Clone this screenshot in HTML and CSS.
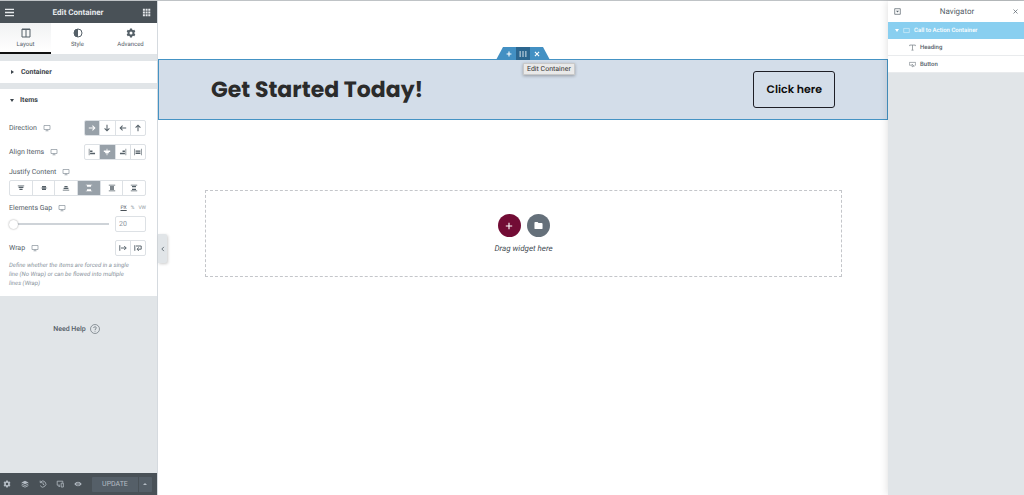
FILE: index.html
```html
<!DOCTYPE html>
<html lang="en">
  <head>
    <meta charset="UTF-8" />
    <meta name="viewport" content="width=device-width, initial-scale=1.0" />
    <title>Edit Container</title>
    <link rel="stylesheet" href="styles.css">
  </head>
  <body>
    <!-- Shared icons -->
    <svg class="sprite" aria-hidden="true">
      <symbol id="desktop" viewBox="0 0 8 8">
        <path d="M1 1.500h6v4H1zM2.500 6.800h3M4 5.500v1.300" fill="none" stroke="currentColor" stroke-width=".7" />
      </symbol>
      <symbol id="gear" viewBox="0 0 10 10">
        <path fill="currentColor" fill-rule="evenodd" d="M4 .6h2l.3 1.200.8.4 1.200-.4 1 1.800-.9.8v1.200l.9.8-1 1.800-1.200-.4-.8.4L6 9.400H4l-.3-1.200-.8-.4-1.200.4-1-1.800.9-.8V4.400l-.9-.8 1-1.800 1.200.4.8-.4zM5 3.500a1.500 1.500 0 1 0 0 3 1.500 1.500 0 0 0 0-3z" />
      </symbol>
      <symbol id="arrow" viewBox="0 0 10 10">
        <path d="M1 5h7.500M5.500 2 8.500 5 5.500 8" fill="none" stroke="currentColor" stroke-width="1.300" />
      </symbol>
      <symbol id="align-side" viewBox="0 0 10 10">
        <path fill="currentColor" d="M1 1h.8v8H1zM2.600 3h3v2h-3zM2.600 5.800h6.200v2H2.600z" />
      </symbol>
    </svg>

    <div class="editor">
      <aside class="panel">
        <header class="panel-header">
          <button class="icon-btn" aria-label="Menu">
            <svg viewBox="0 0 10 10"><path d="M0 1.500h10M0 5h10M0 8.500h10" stroke="currentColor" stroke-width="1.500" /></svg>
          </button>
          <h1>Edit Container</h1>
          <button class="icon-btn" aria-label="Widgets">
            <svg viewBox="0 0 10 10"><path d="M1 2h2.200M4 2h2.200M7 2h2.200M1 5h2.200M4 5h2.200M7 5h2.200M1 8h2.200M4 8h2.200M7 8h2.200" stroke="currentColor" stroke-width="2.200" /></svg>
          </button>
        </header>

        <nav class="tabs">
          <button class="tab active">
            <svg viewBox="0 0 10 10"><path d="M1 1h8v8H1zM5 1v8M1 1.500h8" fill="none" stroke="currentColor" /></svg>
            Layout
          </button>
          <button class="tab">
            <svg viewBox="0 0 10 10"><circle cx="5" cy="5" r="4" fill="none" stroke="currentColor" /><path d="M5 1a4 4 0 0 0 0 8z" fill="currentColor" /></svg>
            Style
          </button>
          <button class="tab">
            <svg><use href="#gear" /></svg>
            Advanced
          </button>
        </nav>

        <section class="section">
          <button class="section-title" aria-expanded="false"><span class="caret"></span>Container</button>
        </section>

        <section class="section">
          <button class="section-title" aria-expanded="true"><span class="caret down"></span>Items</button>
          <div class="controls">
            <div class="row">
              <span class="label">Direction <svg><use href="#desktop" /></svg></span>
              <div class="choices">
                <button class="active" aria-label="Row"><svg><use href="#arrow" /></svg></button>
                <button aria-label="Column"><svg class="turn-down"><use href="#arrow" /></svg></button>
                <button aria-label="Row reversed"><svg class="turn-back"><use href="#arrow" /></svg></button>
                <button aria-label="Column reversed"><svg class="turn-up"><use href="#arrow" /></svg></button>
              </div>
            </div>

            <div class="row">
              <span class="label">Align Items <svg><use href="#desktop" /></svg></span>
              <div class="choices">
                <button aria-label="Start"><svg><use href="#align-side" /></svg></button>
                <button class="active" aria-label="Center"><svg viewBox="0 0 10 10"><path fill="currentColor" d="M4.500 1h1v2H9v2H7.300v1.500H5.500V9h-1V6.500H2.700V5H1V3h3.500z" /></svg></button>
                <button aria-label="End"><svg class="flip"><use href="#align-side" /></svg></button>
                <button aria-label="Stretch"><svg viewBox="0 0 10 10"><path fill="currentColor" d="M.5 1h.8v8H.5zM8.700 1h.8v8h-.8zM2 3h6v1.800H2zM2 5.600h6v1.800H2z" /></svg></button>
              </div>
            </div>

            <div class="stack">
              <span class="label">Justify Content <svg><use href="#desktop" /></svg></span>
              <div class="choices wide">
                <button aria-label="Start"><svg viewBox="0 0 10 10"><path fill="currentColor" d="M1 2h8v.8H1zM2 3.400h6V5H2zM3 5.800h4v1.600H3z" /></svg></button>
                <button aria-label="Center"><svg viewBox="0 0 10 10"><path fill="currentColor" d="M2.500 2.500h5v1.900h-5zM1 4.600h8v.8H1zM2.500 5.600h5v1.900h-5z" /></svg></button>
                <button aria-label="End"><svg viewBox="0 0 10 10"><path fill="currentColor" d="M3 2.500h4v1.600H3zM2 4.800h6v1.600H2zM1 7.200h8V8H1z" /></svg></button>
                <button class="active" aria-label="Space between"><svg viewBox="0 0 10 10"><path fill="currentColor" d="M1 .8h8v.8H1zM2.500 1.600h5v1.800h-5zM2.500 6.600h5v1.800h-5zM1 8.400h8v.8H1z" /></svg></button>
                <button aria-label="Space around"><svg viewBox="0 0 10 10"><path fill="currentColor" d="M1 1h8v.8H1zM2.500 2.900h5v1.800h-5zM2.500 5.300h5v1.800h-5zM1 8.200h8V9H1z" /></svg></button>
                <button aria-label="Space evenly"><svg viewBox="0 0 10 10"><path fill="currentColor" d="M1 1h8v.8H1zM2.500 2.600h5v1.600h-5zM2.500 5.800h5v1.600h-5zM1 8.200h8V9H1z" /></svg></button>
              </div>
            </div>

            <div class="stack">
              <div class="row">
                <label class="label" for="gap">Elements Gap <svg><use href="#desktop" /></svg></label>
                <div class="units"><button class="active">PX</button><button>%</button><button>VW</button></div>
              </div>
              <div class="row slider-row">
                <input type="range" id="gap" min="0" max="100" value="0" />
                <input type="text" class="number" value="20" aria-label="Elements Gap value" />
              </div>
            </div>

            <div class="stack">
              <div class="row">
                <span class="label">Wrap <svg><use href="#desktop" /></svg></span>
                <div class="choices two">
                  <button aria-label="No wrap"><svg viewBox="0 0 10 10"><path d="M1 1.500v7M2.500 5h6.500M6.500 2.500 9 5 6.500 7.500" fill="none" stroke="currentColor" stroke-width="1.200" /></svg></button>
                  <button aria-label="Wrap"><svg viewBox="0 0 10 10"><path d="M1 1.500v7M2.500 2.500H9v4H4M6 4.300l-2.200 2.200L6 8.700" fill="none" stroke="currentColor" stroke-width="1.200" /></svg></button>
                </div>
              </div>
              <p class="hint">Define whether the items are forced in a single line (No Wrap) or can be flowed into multiple lines (Wrap)</p>
            </div>
          </div>
        </section>

        <a class="help" href="#">Need Help
          <svg viewBox="0 0 10 10"><circle cx="5" cy="5" r="4.500" fill="none" stroke="currentColor" stroke-width=".6" /><path d="M3.700 4c0-1.700 2.600-1.600 2.600-.1C6.300 4.900 5 4.900 5 6M5 6.800v.8" fill="none" stroke="currentColor" stroke-width=".7" /></svg>
        </a>

        <footer class="panel-footer">
          <button aria-label="Settings"><svg><use href="#gear" /></svg></button>
          <button aria-label="Structure"><svg viewBox="0 0 10 10"><path d="M5 .8 9.500 3 5 5.200.5 3z" fill="currentColor" /><path d="M.8 5 5 7l4.200-2M.8 7 5 9l4.200-2" fill="none" stroke="currentColor" /></svg></button>
          <button aria-label="History"><svg viewBox="0 0 10 10"><path d="M2 2.500A3.800 3.800 0 1 1 1.500 7M1.500.8v2.500H4M5 3v2.300l1.800 1" fill="none" stroke="currentColor" /></svg></button>
          <button aria-label="Responsive"><svg viewBox="0 0 10 10"><path d="M8.500 3.500V1.500h-7v5H5M3 8h2M6.500 4h2.700v4.800H6.500z" fill="none" stroke="currentColor" /></svg></button>
          <button aria-label="Preview"><svg viewBox="0 0 10 10"><path fill="currentColor" fill-rule="evenodd" d="M.3 5Q5-.5 9.700 5 5 10.500.3 5zM5 3a2 2 0 1 0 0 4 2 2 0 0 0 0-4z" /><circle cx="5" cy="5" r="1" fill="currentColor" /></svg></button>
          <div class="update">
            <button class="update-btn">UPDATE</button>
            <button class="update-more" aria-label="Save options"><span class="caret up"></span></button>
          </div>
        </footer>
      </aside>

      <main class="canvas">
        <button class="collapse" aria-label="Hide panel">
          <svg viewBox="0 0 10 10"><path d="M6.500 1.500 3 5l3.500 3.500" fill="none" stroke="currentColor" stroke-width="1.400" /></svg>
        </button>

        <section class="cta">
          <div class="handles">
            <button aria-label="Add"><svg viewBox="0 0 10 10"><path d="M5 1v8M1 5h8" stroke="currentColor" stroke-width="1.800" /></svg></button>
            <button class="edit" aria-label="Edit Container"><svg viewBox="0 0 10 10"><path d="M.5 2.500h2M4 2.500h2M7.500 2.500h2M.5 5h2M4 5h2M7.500 5h2M.5 7.500h2M4 7.500h2M7.500 7.500h2" stroke="currentColor" stroke-width="1.500" /></svg></button>
            <button aria-label="Delete"><svg viewBox="0 0 10 10"><path d="m1.500 1.500 7 7M8.500 1.500l-7 7" stroke="currentColor" stroke-width="1.800" /></svg></button>
          </div>
          <span class="tooltip">Edit Container</span>
          <h2>Get Started Today!</h2>
          <button class="cta-btn">Click here</button>
        </section>

        <section class="drop">
          <div class="drop-actions">
            <button class="add" aria-label="Add new container"><svg viewBox="0 0 10 10"><path d="M5 1v8M1 5h8" stroke="currentColor" stroke-width="1.400" /></svg></button>
            <button class="folder" aria-label="Add template"><svg viewBox="0 0 10 10"><path d="M.5 2Q.5 1 1.500 1H4l1 1.200h3.500q1 0 1 1V8q0 1-1 1h-7q-1 0-1-1z" fill="currentColor" /></svg></button>
          </div>
          <p>Drag widget here</p>
        </section>
      </main>

      <aside class="navigator">
        <header>
          <button class="icon-btn" aria-label="Dock"><svg viewBox="0 0 10 10"><path d="M1 1h8v8H1z" fill="none" stroke="currentColor" /><path d="M2.800 4h4.400L5 6.500z" fill="currentColor" /></svg></button>
          <h2>Navigator</h2>
          <button class="icon-btn small" aria-label="Close"><svg viewBox="0 0 10 10"><path d="m1 1 8 8M9 1 1 9" stroke="currentColor" stroke-width="1.400" /></svg></button>
        </header>
        <ul>
          <li><a class="active" href="#"><span class="caret down"></span><svg viewBox="0 0 10 10"><path d="M1 2h8v6H1z" fill="none" stroke="currentColor" stroke-width=".8" /></svg>Call to Action Container</a></li>
          <li><a href="#"><svg viewBox="0 0 10 10"><path d="M1 3V1.500h8V3M5 1.500v7M3.500 8.800h3" fill="none" stroke="currentColor" /></svg>Heading</a></li>
          <li><a href="#"><svg viewBox="0 0 10 10"><path d="M4 6H.5V2h9v4H8M4.500 4.500v4l1.200-1h1.800z" fill="none" stroke="currentColor" stroke-width=".9" /></svg>Button</a></li>
        </ul>
      </aside>
    </div>
  </body>
</html>
```

FILE: styles.css
```css
* {
  box-sizing: border-box;
}
body {
  margin: 0;
  font-family: Roboto, sans-serif;
  font-size: 7px;
  line-height: 9px;
  color: #556068;
  background: #fff;
  text-rendering: geometricPrecision;
}
h1,
h2,
p,
ul {
  margin: 0;
  padding: 0;
}
button,
input {
  font: inherit;
  color: inherit;
  margin: 0;
  padding: 0;
  border: 0;
  background: none;
  text-rendering: inherit;
}
button {
  display: flex;
  align-items: center;
  justify-content: center;
  cursor: pointer;
}
a {
  color: inherit;
  text-decoration: none;
}
svg {
  width: 8px;
  height: 8px;
  flex: none;
}
.sprite {
  display: none;
}
.editor {
  display: grid;
  grid-template-columns: 158px 1fr 136px;
  min-height: 100vh;
  border-top: 1px solid #bfc3c6;
}

/* Triangles */
.caret {
  border: 2px solid transparent;
  border-left: 3px solid currentColor;
  border-right: 0;
}
.caret.down {
  border: 2px solid transparent;
  border-top: 3px solid currentColor;
  border-bottom: 0;
}
.caret.up {
  border: 2px solid transparent;
  border-bottom: 2px solid currentColor;
  border-top: 0;
}

/* Left panel */
.panel {
  display: flex;
  flex-direction: column;
  background: #e1e5e8;
  border-right: 1px solid #d5dadf;
}
.panel-header {
  display: flex;
  align-items: center;
  justify-content: space-between;
  height: 22px;
  padding: 0 6px 0 5px;
  background: #495157;
  color: #e6e9ec;
}
.panel-header h1 {
  font-size: 8px;
  font-weight: 700;
}
.icon-btn svg {
  width: 9px;
  height: 9px;
}
.tabs {
  display: grid;
  grid-template-columns: 51px 1fr 1fr;
  height: 31px;
  margin-bottom: 7px;
  background: #fff;
}
.tab {
  flex-direction: column;
  gap: 2px;
  padding-top: 2px;
  font-size: 6px;
  border-bottom: 2px solid transparent;
}
.tab svg {
  width: 10px;
  height: 10px;
}
.tab.active {
  background: linear-gradient(#f1f2f3, #fff);
  border-color: #111;
}
.section {
  margin-bottom: 6px;
  background: #fff;
}
.section-title {
  justify-content: flex-start;
  gap: 6px;
  width: 100%;
  height: 22px;
  padding-left: 10px;
  font-weight: 700;
  color: #3c444b;
}
.section-title .caret {
  margin: 0 1px;
}
.section-title .caret.down {
  margin: 0;
}
.controls {
  display: flex;
  flex-direction: column;
  gap: 8px;
  padding: 9px 11px 8px 9px;
}
.row {
  display: flex;
  align-items: center;
  justify-content: space-between;
}
.stack {
  display: flex;
  flex-direction: column;
}
.label {
  display: flex;
  align-items: center;
  gap: 6px;
  line-height: 8px;
}
.label svg {
  color: #88929b;
}
.choices {
  display: flex;
  width: 62px;
  height: 16px;
  border: 1px solid #dde1e5;
  border-radius: 2px;
  overflow: hidden;
}
.choices.wide {
  width: 100%;
  margin-top: 4px;
}
.choices.two {
  width: 31px;
}
.choices button {
  flex: 1;
}
.choices button + button {
  border-left: 1px solid #dde1e5;
}
.choices button.active {
  background: #98a1a9;
  color: #fff;
}
.turn-down {
  rotate: 90deg;
}
.turn-back {
  rotate: 180deg;
}
.turn-up {
  rotate: 270deg;
}
.flip {
  scale: -1 1;
}
.units {
  display: flex;
  gap: 4px;
  font-size: 5px;
  line-height: 8px;
  color: #8b949c;
}
.units .active {
  color: #495157;
  text-decoration: underline;
}
.slider-row {
  gap: 6px;
  margin-top: 4px;
}
input[type="range"] {
  appearance: none;
  flex: 1;
  min-width: 0;
  height: 10px;
  background: linear-gradient(#ced3d8, #ced3d8) center / 100% 2px no-repeat;
}
input[type="range"]::-webkit-slider-thumb {
  appearance: none;
  width: 9px;
  height: 9px;
  border-radius: 50%;
  background: #fff;
  box-shadow: 0 0 2px rgba(0, 0, 0, 0.4);
}
.number {
  width: 31px;
  height: 16px;
  padding: 0 3px;
  border: 1px solid #dde1e5;
  border-radius: 2px;
  color: #8b949c;
}
.hint {
  margin-top: 5px;
  padding-right: 12px;
  font-size: 6px;
  font-style: italic;
  color: #89939c;
}
.help {
  display: flex;
  align-items: center;
  justify-content: center;
  gap: 4px;
  margin-top: 22px;
  padding-right: 4px;
  font-weight: 500;
}
.help svg {
  width: 10px;
  height: 10px;
}
.panel-footer {
  display: flex;
  justify-content: space-between;
  align-items: center;
  height: 22px;
  margin-top: auto;
  padding: 0 5px 0 3px;
  background: #495157;
  color: #b4bcc4;
}
.update {
  display: flex;
  height: 15px;
  background: #555f68;
  border-radius: 1px;
}
.update-btn {
  width: 46px;
}
.update-more {
  width: 14px;
  border-left: 1px solid #495157;
}

/* Page canvas */
.canvas {
  position: relative;
  padding-top: 58px;
}
.collapse {
  position: absolute;
  left: 0;
  top: 233px;
  width: 9px;
  height: 29px;
  background: #e1e5e8;
  border-radius: 0 2px 2px 0;
  box-shadow: 1px 1px 3px rgba(0, 0, 0, 0.2);
}
.collapse svg {
  width: 6px;
  height: 6px;
}
.cta {
  position: relative;
  display: flex;
  align-items: center;
  justify-content: space-between;
  padding: 11px 52px;
  background: #d3dde9;
  border: 1px solid #4593c4;
}
.cta h2 {
  font-family: Poppins, Inter, sans-serif;
  font-size: 22px;
  line-height: 32px;
  font-weight: 700;
  color: #2b2b2b;
}
.cta-btn {
  height: 37px;
  padding: 0 12px;
  border: 1px solid #1e1e26;
  border-radius: 3px;
  font-family: Poppins, Inter, sans-serif;
  font-size: 11px;
  font-weight: 600;
  color: #0d0d0d;
}
.handles {
  position: absolute;
  bottom: 100%;
  left: 50%;
  translate: -50% 0;
  display: flex;
  width: 54px;
  height: 13px;
  padding: 0 6px;
  background: #4390c3;
  color: #fff;
  clip-path: polygon(7px 0, 47px 0, 100% 100%, 0 100%);
}
.handles button {
  flex: 1;
}
.handles svg {
  width: 6px;
  height: 6px;
}
.handles .edit {
  background: #2c668f;
}
.handles .edit svg {
  width: 8px;
  height: 8px;
}
.tooltip {
  position: absolute;
  left: 50%;
  top: 3px;
  height: 12px;
  padding: 0 3px;
  line-height: 11px;
  background: #e9e9e9;
  border: 1px solid #c9c9c9;
  color: #333;
  box-shadow: 0 1px 3px rgba(0, 0, 0, 0.3);
}
.drop {
  margin: 70px 46px 0 47px;
  padding: 23px 0;
  border: 1px dashed #c4c6ca;
  text-align: center;
}
.drop-actions {
  display: flex;
  justify-content: center;
  gap: 6px;
  margin-bottom: 7px;
}
.drop-actions button {
  width: 23px;
  height: 23px;
  border-radius: 50%;
  background: #720c35;
  color: #fff;
}
.drop-actions .folder {
  background: #65707a;
}
.drop-actions .folder svg {
  width: 9px;
  height: 9px;
}
.drop p {
  font-size: 8px;
  font-style: italic;
  color: #444c54;
}

/* Navigator */
.navigator {
  position: relative;
  background: #e1e5e8;
  box-shadow: 0 0 8px rgba(0, 0, 0, 0.15);
}
.navigator header {
  display: flex;
  align-items: center;
  justify-content: space-between;
  height: 21px;
  padding: 0 6px;
  background: #fff;
}
.navigator h2 {
  font-size: 8px;
  font-weight: 400;
}
.navigator .icon-btn svg {
  width: 7px;
  height: 7px;
}
.navigator .small svg {
  width: 5px;
  height: 5px;
}
.navigator ul {
  list-style: none;
}
.navigator li a {
  display: flex;
  align-items: center;
  gap: 4px;
  height: 17px;
  padding: 1px 0 0 21px;
  font-size: 6px;
  font-weight: 500;
  background: #fff;
  border-bottom: 1px solid #e9ebed;
}
.navigator li svg {
  width: 7px;
  height: 7px;
  opacity: 0.8;
}
.navigator li a.active {
  padding-left: 7px;
  background: #89cff0;
  border-color: #89cff0;
  color: #fff;
}
```
